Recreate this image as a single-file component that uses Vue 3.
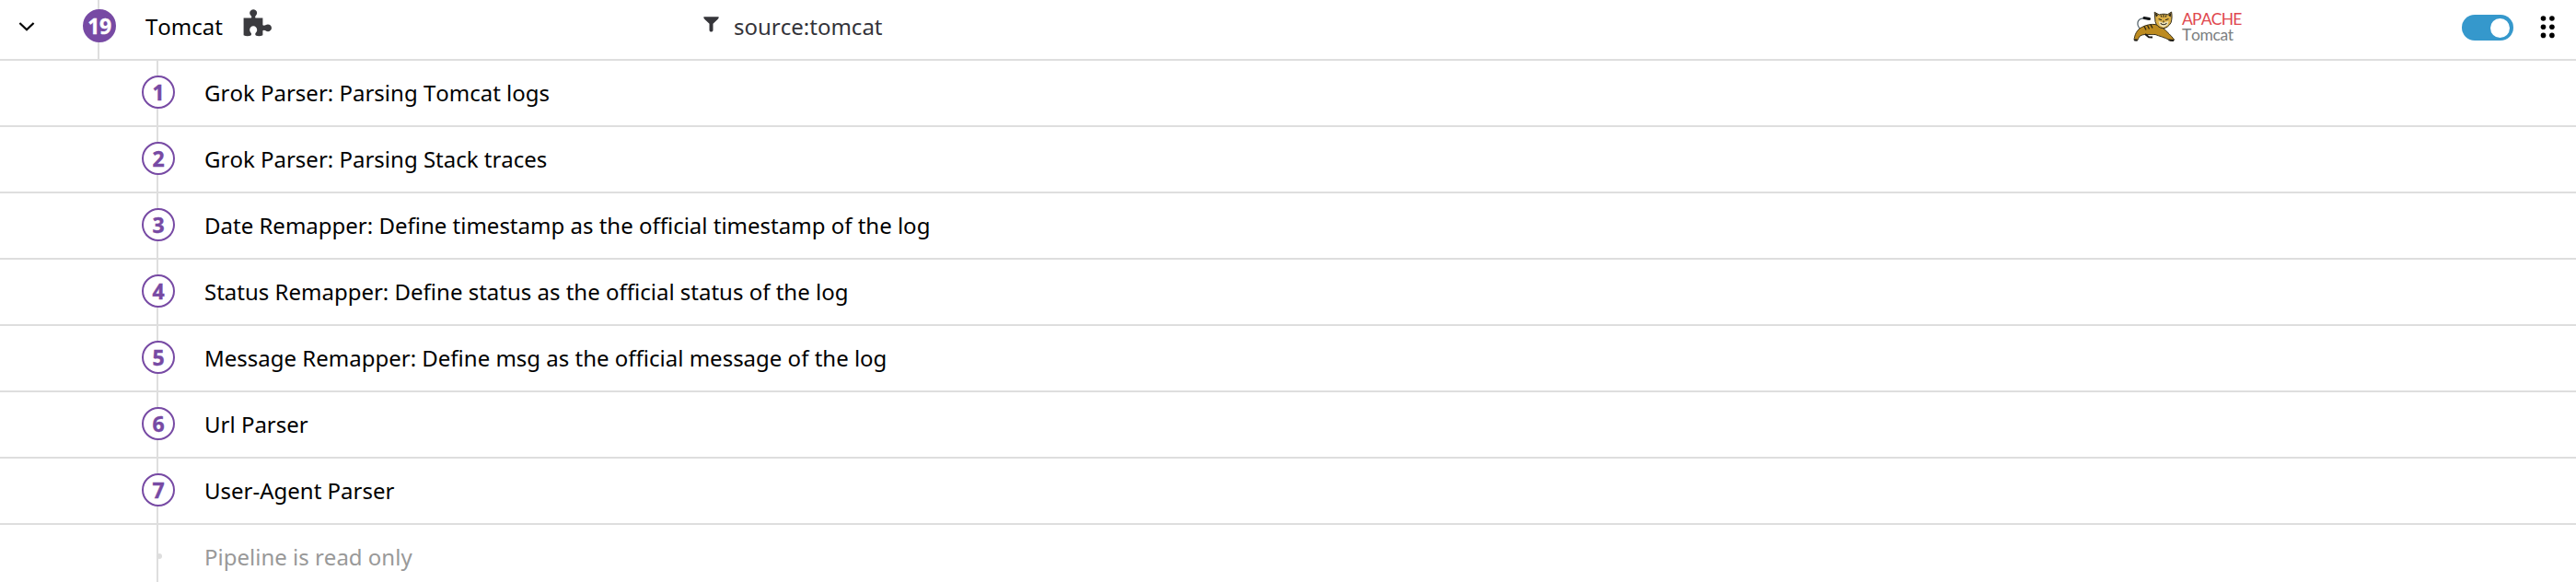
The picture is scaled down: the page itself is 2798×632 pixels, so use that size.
<template>
  <div class="pipelines">
    <div class="row row--pipeline">
      <button class="toggle-btn" aria-label="Collapse">
        <svg width="18" height="12" viewBox="0 0 18 12">
          <path d="M1.4 2 L9 9.3 L16.6 2" fill="none" stroke="#000" stroke-width="2.2" />
        </svg>
      </button>
      <div class="step">
        <span class="badge badge--solid">{{ pipeline.order }}</span>
      </div>
      <div class="name">
        <span class="name__text">{{ pipeline.name }}</span>
        <svg class="icon-puzzle" width="32" height="30" viewBox="0 0 32 30">
          <path
            fill="#3b3b3f"
            d="M0.6 9.4 H9 C9.6 8.6 9.3 7.6 8.4 6.7 C5.9 4.2 7.8 0.2 11.2 0.2 C14.7 0.2 16.5 4.2 14 6.7 C13.1 7.6 12.9 8.6 13.5 9.4 H21.4 V17.3 C22.2 17.9 23.4 17.9 24.4 17.3 C27 15.2 31 16.9 31 20.3 C31 23.8 27 25.3 24.4 23.3 C23.4 22.6 22.2 22.6 21.4 23.3 V28.2 C19.3 29.3 16.6 29.4 14.4 28.8 C13.2 28.2 12.9 26.9 13.7 25.8 C14.6 24.8 15.2 23.7 15.2 22.5 C15.2 20.1 13.3 18.3 11.2 18.3 C9 18.3 7.2 20.1 7.2 22.5 C7.2 23.7 7.7 24.8 8.6 25.8 C9.4 26.9 9.2 28.2 7.9 28.8 C5.6 29.4 2.7 29.3 0.6 28.2 Z"
          />
        </svg>
      </div>
      <div class="filter">
        <svg class="icon-filter" width="18" height="17" viewBox="0 0 18 17">
          <path
            fill="#35353a"
            d="M0.4 0.3 H16.6 C16.8 1.6 16.3 2.4 15.3 3.3 L10.5 7.7 V14.4 C10.5 15.8 9.7 16.4 8.5 16.4 C7.3 16.4 6.5 15.8 6.5 14.4 V7.7 L1.7 3.3 C0.7 2.4 0.2 1.6 0.4 0.3 Z"
          />
        </svg>
        <span>{{ pipeline.filter }}</span>
      </div>
      <div class="logo">
        <svg width="54" height="36" viewBox="-1 -1 54 36">
          <!-- tail -->
          <path d="M10 20 C3.5 18 3.5 10.5 8.5 8.4 C11 7.4 13.5 8 16.5 9" fill="none" stroke="#5d6b73" stroke-width="1.3" />
          <path d="M12 7.6 L17.5 8.6" stroke="#15181a" stroke-width="3" stroke-linecap="round" />
          <!-- body -->
          <path
            d="M1 31.5 C1.5 26 4 20 9.5 17.5 C14 15 19.5 14 24 14.5 L32 18 C37 22.5 41.5 27 44.5 31 C45 32.8 40.5 33 39 31.3 C34 28.5 29 27.5 24 25.5 C17.5 25.8 11.5 24.5 7.5 27 C6 28.5 5.5 30.5 4.5 32 Z"
            fill="#bd8b20" stroke="#3b3219" stroke-width="1"
          />
          <path
            d="M12 16.5 L14 20.5 M15.5 15.5 L17.5 19.5 M19 14.6 L21 18.5"
            stroke="#2b2512" stroke-width="1.3" fill="none"
          />
          <path d="M13 25 L17 28.3 L21 28.5 M1.3 31.5 H4.5 M38.5 31.3 L44 32" stroke="#1c1b18" stroke-width="1.8" fill="none" />
          <!-- head -->
          <path
            d="M23.2 1.2 L28.2 4 C31.2 3 34.8 3 37.3 3.8 L41.6 1 C42.3 5.2 42.2 9 41.1 12.5 C39.2 16 36 18.6 32.5 18.8 C28 18.2 25 15.5 24 11.5 Z"
            fill="#dcb048" stroke="#302a19" stroke-width="1"
          />
          <path d="M27.5 11 L32.5 12.5 L38.5 11 L37.5 15.2 L33 17.8 L28.8 15.4 Z" fill="#eee1b6" />
          <path
            d="M23.8 2.1 L27 4.6 L25 6.6 Z M41.1 2 L38.2 4.6 L40.7 6.6 Z"
            fill="#1e1d1b"
          />
          <path
            d="M33 3.8 V6.8 M30 4.4 L31 6.6 M36 4.4 L35 6.6 M27.6 8.6 L31 9.8 M38.5 8.6 L35 9.8 M33 10.5 V12.5 M29.8 13 C31.2 15.4 34.8 15.4 36.4 13"
            stroke="#29251b" stroke-width="1.1" fill="none"
          />
        </svg>
        <div class="logo__text">
          <span class="logo__apache">APACHE</span>
          <span class="logo__tomcat">Tomcat</span>
        </div>
      </div>
      <div class="switch"><span class="switch__knob" /></div>
      <svg class="icon-drag" width="16" height="26" viewBox="0 0 16 26">
        <template v-for="y in [4, 13.2, 22.4]" :key="y">
          <circle cx="3.5" :cy="y" r="2.8" />
          <circle cx="12.9" :cy="y" r="2.8" />
        </template>
      </svg>
    </div>

    <div v-for="(processor, i) in processors" :key="processor" class="row row--processor">
      <div class="step">
        <span class="badge">{{ i + 1 }}</span>
      </div>
      <span class="label">{{ processor }}</span>
    </div>

    <div class="row row--processor row--last">
      <div class="step">
        <span class="dot" />
      </div>
      <span class="label label--muted">Pipeline is read only</span>
    </div>
  </div>
</template>

<script setup>
const pipeline = { order: 19, name: 'Tomcat', filter: 'source:tomcat' }

const processors = [
  'Grok Parser: Parsing Tomcat logs',
  'Grok Parser: Parsing Stack traces',
  'Date Remapper: Define timestamp as the official timestamp of the log',
  'Status Remapper: Define status as the official status of the log',
  'Message Remapper: Define msg as the official message of the log',
  'Url Parser',
  'User-Agent Parser',
]
</script>

<style>
body { margin: 0; background: #fff; }
</style>

<style scoped>
.pipelines {
  height: 632px;
  overflow: hidden;
  font-family: 'Noto Sans', sans-serif;
  font-size: 24px;
  font-kerning: none;
  line-height: 34px;
  color: #000;
}

.row {
  display: flex;
  align-items: center;
  box-sizing: border-box;
  height: 72px;
  border-bottom: 2px solid #dedede;
}
.row--pipeline { margin-top: -6px; }
.row--processor { padding-left: 154px; }
.row--last { border-bottom-color: transparent; }

.toggle-btn {
  display: flex;
  width: 90px;
  padding: 0 0 0 20px;
  border: none;
  background: none;
  box-sizing: border-box;
}

/* Vertical connector running behind the numbered badge */
.step {
  display: flex;
  flex: none;
  align-items: flex-start;
  align-self: stretch;
  width: 36px;
  padding-top: 16px;
  box-sizing: border-box;
  background: linear-gradient(#dedede, #dedede) 16px 0 / 2px 100% no-repeat;
}

.badge {
  display: flex;
  align-items: center;
  justify-content: center;
  box-sizing: border-box;
  width: 36px;
  height: 36px;
  border: 2px solid #774aa4;
  border-radius: 50%;
  background: #fff;
  color: #774aa4;
  font-family: 'Open Sans', 'Noto Sans', sans-serif;
  font-size: 23px;
  font-weight: 700;
  -webkit-text-stroke: 0.4px currentColor;
}
.badge--solid { background: #774aa4; color: #fff; letter-spacing: -0.5px; }

.dot {
  width: 6px;
  height: 6px;
  margin: 15px 0 0 16px;
  border-radius: 50%;
  background: #dedede;
}

.label { margin-left: 32px; }
.label--muted { color: #999; }

.name {
  display: flex;
  align-items: center;
  width: 606px;
  margin-left: 32px;
}
.name__text { width: 106px; }
.icon-puzzle { margin-top: -9px; }

.filter {
  display: flex;
  align-items: center;
  gap: 15px;
  width: 1552px;
  color: #34343a;
}
.icon-filter { margin-top: -6px; }

.logo { display: flex; align-items: center; width: 358px; }
.logo__text {
  display: flex;
  flex-direction: column;
  font-family: Lato, sans-serif;
  font-size: 17.5px;
  line-height: 17px;
}
.logo__apache { color: #e0484e; letter-spacing: -0.8px; }
.logo__tomcat { color: #7c7f81; letter-spacing: -0.4px; }

.switch {
  display: flex;
  align-items: center;
  justify-content: flex-end;
  box-sizing: border-box;
  width: 56px;
  height: 28px;
  margin-top: 2px;
  padding-right: 4px;
  border-radius: 14px;
  background: #3598cc;
}
.switch__knob { width: 21px; height: 21px; border-radius: 50%; background: #fff; }

.icon-drag { margin-left: 29px; }
</style>
